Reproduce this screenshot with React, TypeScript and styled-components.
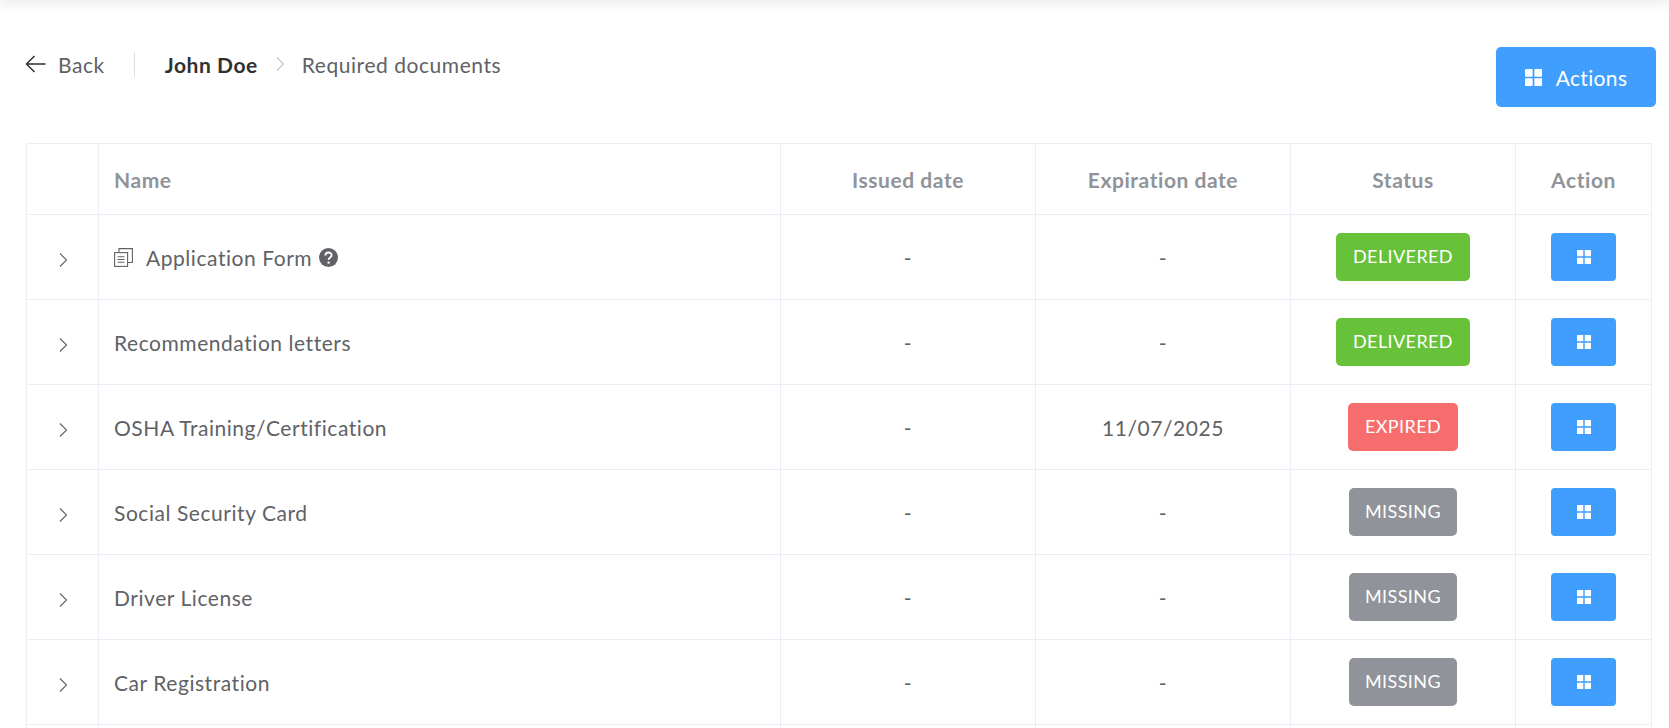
import styled, { createGlobalStyle } from 'styled-components';

const GlobalStyle = createGlobalStyle`
  html, body {
    margin: 0;
    height: 728px;
    overflow: hidden;
    background: #fff;
    font-family: 'Lato', 'Open Sans', sans-serif;
  }
`;

const TopShadow = styled.div`
  height: 0;
  box-shadow: 0 0 12px 3px rgba(0, 0, 0, 0.12);
`;

const Page = styled.div`
  padding: 47px 13px 0 25px;
`;

const Toolbar = styled.div`
  display: flex;
  justify-content: space-between;
  align-items: flex-start;
  margin-bottom: 36px;
`;

const Crumbs = styled.div`
  display: flex;
  align-items: center;
  height: 34px;
  font-size: 21px;
  letter-spacing: 0.55px;
  color: #606266;
`;

const BackLink = styled.div`
  display: flex;
  align-items: center;
  gap: 12px;
  padding-right: 29px;
  border-right: 1px solid #dcdfe6;
  height: 25px;
  margin-right: 30px;
`;

const Current = styled.span`
  font-weight: 700;
  color: #303133;
`;

const Separator = styled.span`
  display: flex;
  margin: 0 14px;
  color: #c0c4cc;
`;

const ActionsButton = styled.button`
  display: flex;
  align-items: center;
  justify-content: center;
  gap: 14px;
  width: 160px;
  height: 60px;
  padding: 0;
  border: 0;
  border-radius: 5px;
  background: #409eff;
  color: #fff;
  font: 400 21px 'Lato', sans-serif;
  letter-spacing: 0.35px;
`;

const Table = styled.table`
  width: 1626px;
  margin-left: 1px;
  table-layout: fixed;
  border-collapse: collapse;
  font-size: 21px;
  letter-spacing: 0.55px;
  color: #606266;
`;

const HeadCell = styled.th<{ $width: number; $left?: boolean }>`
  width: ${(p) => p.$width}px;
  height: 71px;
  padding: 0 15px;
  box-sizing: border-box;
  border: 1px solid #ebeef5;
  text-align: ${(p) => (p.$left ? 'left' : 'center')};
  font-weight: 700;
  color: #909399;
`;

const Cell = styled.td<{ $left?: boolean }>`
  height: 85px;
  padding: 0 15px;
  box-sizing: border-box;
  border: 1px solid #ebeef5;
  text-align: ${(p) => (p.$left ? 'left' : 'center')};
`;

const NameWrap = styled.div`
  display: flex;
  align-items: center;
`;

const Expander = styled.span`
  display: inline-flex;
  vertical-align: middle;
  color: #606266;
`;

const Badge = styled.span<{ $bg: string; $width: number }>`
  display: inline-flex;
  align-items: center;
  justify-content: center;
  vertical-align: middle;
  width: ${(p) => p.$width}px;
  height: 48px;
  padding-bottom: 2px;
  box-sizing: border-box;
  border-radius: 5px;
  background: ${(p) => p.$bg};
  color: #fff;
  font-size: 18px;
  letter-spacing: 0.4px;
`;

const RowButton = styled.button`
  display: inline-flex;
  align-items: center;
  justify-content: center;
  vertical-align: middle;
  width: 65px;
  height: 48px;
  padding: 0;
  border: 0;
  border-radius: 4px;
  background: #409eff;
`;

const DocIcon = styled.svg`
  margin-right: 13px;
  flex: none;
`;

const HelpIcon = styled.svg`
  margin-left: 7px;
  flex: none;
`;

const GridIcon = ({ size }: { size: number }) => (
  <svg width={size} height={size} viewBox="0 0 16 16" fill="#fff">
    <rect x="0" y="0" width="7.2" height="7.2" rx="0.6" />
    <rect x="8.8" y="0" width="7.2" height="7.2" rx="0.6" />
    <rect x="0" y="8.8" width="7.2" height="7.2" rx="0.6" />
    <rect x="8.8" y="8.8" width="7.2" height="7.2" rx="0.6" />
  </svg>
);

const Chevron = ({ size = 16 }: { size?: number }) => (
  <svg width={size} height={size} viewBox="0 0 16 16" fill="none" stroke="currentColor" strokeWidth="1.1">
    <path d="M5 1.5 L11.5 8 L5 14.5" />
  </svg>
);

const statusStyles = {
  DELIVERED: { bg: '#67c23a', width: 134 },
  EXPIRED: { bg: '#f76d6d', width: 110 },
  MISSING: { bg: '#909399', width: 108 },
};

type Status = keyof typeof statusStyles;

const documents: { name: string; expires: string; status: Status; form?: boolean }[] = [
  { name: 'Application Form', expires: '-', status: 'DELIVERED', form: true },
  { name: 'Recommendation letters', expires: '-', status: 'DELIVERED' },
  { name: 'OSHA Training/Certification', expires: '11/07/2025', status: 'EXPIRED' },
  { name: 'Social Security Card', expires: '-', status: 'MISSING' },
  { name: 'Driver License', expires: '-', status: 'MISSING' },
  { name: 'Car Registration', expires: '-', status: 'MISSING' },
];

const App = () => (
  <>
    <GlobalStyle />
    <TopShadow />
    <Page>
      <Toolbar>
        <Crumbs>
          <BackLink>
            <svg width="21" height="18" viewBox="0 0 21 18" fill="none" stroke="#303133" strokeWidth="1.5">
              <path d="M20.5 9 H1.5 M9.5 1 L1.5 9 L9.5 17" />
            </svg>
            Back
          </BackLink>
          <Current>John Doe</Current>
          <Separator>
            <Chevron />
          </Separator>
          Required documents
        </Crumbs>
        <ActionsButton>
          <GridIcon size={17} />
          Actions
        </ActionsButton>
      </Toolbar>
      <Table>
        <thead>
          <tr>
            <HeadCell $width={72} />
            <HeadCell $width={682} $left>Name</HeadCell>
            <HeadCell $width={255}>Issued date</HeadCell>
            <HeadCell $width={255}>Expiration date</HeadCell>
            <HeadCell $width={225}>Status</HeadCell>
            <HeadCell $width={136}>Action</HeadCell>
          </tr>
        </thead>
        <tbody>
          {documents.map((doc) => (
            <tr key={doc.name}>
              <Cell>
                <Expander>
                  <Chevron />
                </Expander>
              </Cell>
              <Cell $left>
                <NameWrap>
                  {doc.form && (
                    <DocIcon width="19" height="19" viewBox="0 0 19 19" fill="none" stroke="#606266" strokeWidth="1.1">
                      <rect x="0.6" y="4.6" width="13" height="13.8" />
                      <path d="M5 4.5 V0.6 H18.4 V14.5 H13.8 M3.5 8.8 H10.5 M3.5 11.5 H10.5 M3.5 14.2 H10.5" />
                    </DocIcon>
                  )}
                  {doc.name}
                  {doc.form && (
                    <HelpIcon width="19" height="19" viewBox="0 0 19 19">
                      <circle cx="9.5" cy="9.5" r="9.5" fill="#606266" />
                      <path d="M6.4 7.4 C6.5 3.6 12.6 3.6 12.6 7.3 C12.6 9.6 9.6 9.5 9.6 11.8" fill="none" stroke="#fff" strokeWidth="1.9" />
                      <circle cx="9.6" cy="14.6" r="1.2" fill="#fff" />
                    </HelpIcon>
                  )}
                </NameWrap>
              </Cell>
              <Cell>-</Cell>
              <Cell>{doc.expires}</Cell>
              <Cell>
                <Badge $bg={statusStyles[doc.status].bg} $width={statusStyles[doc.status].width}>
                  {doc.status}
                </Badge>
              </Cell>
              <Cell>
                <RowButton>
                  <GridIcon size={14} />
                </RowButton>
              </Cell>
            </tr>
          ))}
          <tr>
            <Cell />
            <Cell />
            <Cell />
            <Cell />
            <Cell />
            <Cell />
          </tr>
        </tbody>
      </Table>
    </Page>
  </>
);

export default App;
